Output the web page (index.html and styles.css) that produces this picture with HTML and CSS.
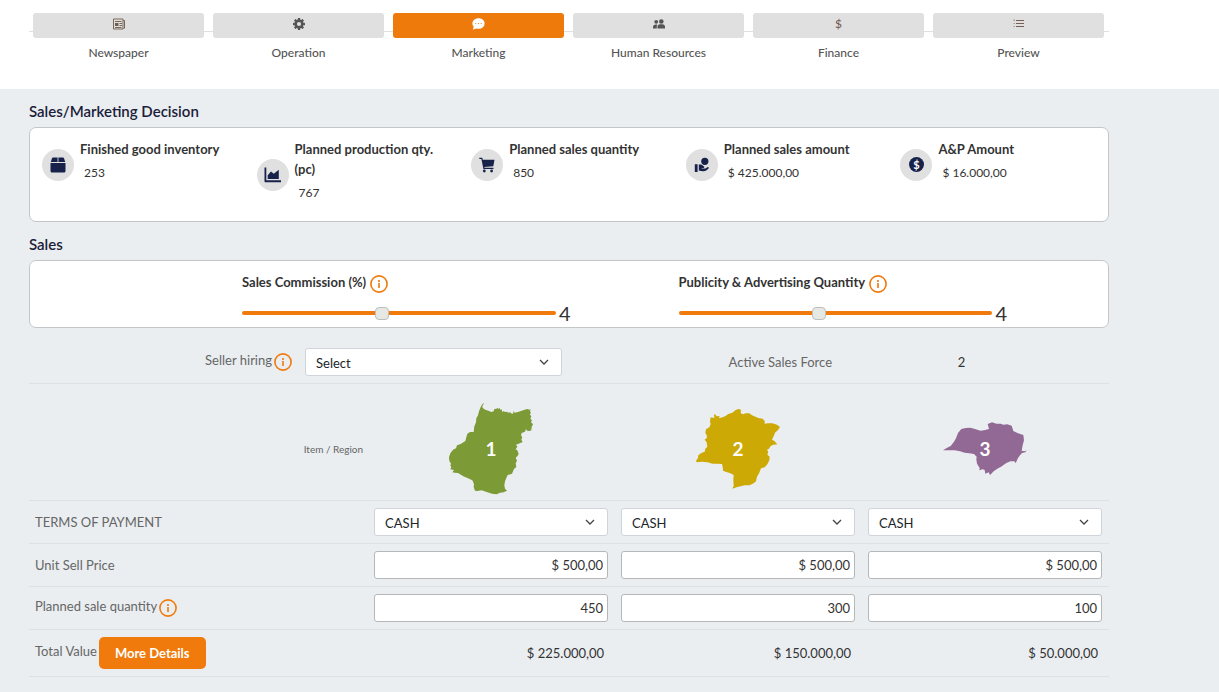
FILE: index.html
```html
<!DOCTYPE html>
<html lang="en">
<head>
  <meta charset="UTF-8" />
  <meta name="viewport" content="width=device-width, initial-scale=1.0"/>
  <title>Sales/Marketing Decision</title>
  <link rel="stylesheet" href="styles.css">
</head>
<body>
  <!-- shared icon -->
  <svg class="hidden">
    <symbol id="icon-info" viewBox="0 0 18 18">
      <circle cx="9" cy="9" r="8.1" fill="none" stroke="#f07a0c" stroke-width="1.6"/>
      <path d="M8 5h2v2H8zM8 8h2v5H8z" fill="#f0923c"/>
    </symbol>
  </svg>

  <header>
    <nav>
      <ul class="steps">
        <li>
          <a href="#">
            <span class="step-box">
              <svg width="12" height="12" viewBox="0 0 12 12" fill="none" stroke="#7a6657"><path d="M.5 1h9.500v10H.5zM10 2.500h1.500v7.500l-1 1"/><path d="M2 3.500h6.500M6.500 5.500H9M6.500 7.500H9M2 9.500h6.500"/><path d="M2 5h3.500v3H2z" fill="#6b6057" stroke="none"/></svg>
            </span>
            Newspaper
          </a>
        </li>
        <li>
          <a href="#">
            <span class="step-box">
              <svg width="12" height="12" viewBox="0 0 12 12"><g fill="#555"><rect x="4.800" width="2.400" height="12" rx=".5"/><rect x="4.800" width="2.400" height="12" rx=".5" transform="rotate(45 6 6)"/><rect x="4.800" width="2.400" height="12" rx=".5" transform="rotate(90 6 6)"/><rect x="4.800" width="2.400" height="12" rx=".5" transform="rotate(135 6 6)"/><circle cx="6" cy="6" r="4.500"/></g><circle cx="6" cy="6" r="2.100" fill="#e0e0e0"/></svg>
            </span>
            Operation
          </a>
        </li>
        <li class="active">
          <a href="#">
            <span class="step-box">
              <svg width="13" height="12" viewBox="0 0 13 12"><path d="M6.500.2C3 .2.400 2.500.400 5.400c0 1.300.500 2.400 1.300 3.300L.900 11.800l3.300-1.300c.7.200 1.500.300 2.300.300 3.500 0 6.100-2.400 6.100-5.400S10 .200 6.500.200z" fill="#fff"/><g fill="#ee7a0c"><circle cx="3.800" cy="5.500" r=".6"/><circle cx="6.500" cy="5.500" r=".6"/><circle cx="9.200" cy="5.500" r=".6"/></g></svg>
            </span>
            Marketing
          </a>
        </li>
        <li>
          <a href="#">
            <span class="step-box">
              <svg width="12" height="12" viewBox="0 0 12 12" fill="#555"><circle cx="3.200" cy="3.800" r="1.900"/><circle cx="8.300" cy="3.500" r="2.300"/><path d="M0 10.500V8.800C0 7.300 1.200 6.400 2.800 6.400h1.500C3.800 7.200 3.800 8.500 3.800 10.500zM4.500 10.500V8.800c0-1.500 1-2.500 2.500-2.500h2.500c1.500 0 2.500 1 2.500 2.500v1.700z"/></svg>
            </span>
            Human Resources
          </a>
        </li>
        <li>
          <a href="#">
            <span class="step-box dollar">$</span>
            Finance
          </a>
        </li>
        <li>
          <a href="#">
            <span class="step-box">
              <svg width="12" height="12" viewBox="0 0 12 12" fill="#765f58"><path d="M3 2h8v1H3zM3 5h8v1H3zM3 8h8v1H3z"/><path d="M.500 1.500H2v1.500H.500zM.500 5H2v1H.500zM.500 8H2v1H.500z" fill="#a39a96"/></svg>
            </span>
            Preview
          </a>
        </li>
      </ul>
    </nav>
  </header>

  <main>
    <h2>Sales/Marketing Decision</h2>
    <section class="card summary">
      <div class="stat">
        <span class="stat-icon">
          <svg width="16" height="16" viewBox="0 0 16 16" fill="#17224a"><path d="M3 .5h4.600V5H.8l1.100-3.600C2.100.800 2.400.500 3 .500zM8.400.500H13c.6 0 .9.300 1.100.900L15.200 5H8.400zM.500 6h15v8c0 .900-.600 1.500-1.500 1.500H2c-.900 0-1.500-.600-1.500-1.500z"/></svg>
        </span>
        <div>
          <h3>Finished good inventory</h3>
          <p>253</p>
        </div>
      </div>
      <div class="stat">
        <span class="stat-icon">
          <svg width="17" height="16" viewBox="0 0 17 16" fill="#17224a"><path d="M.500.500h1.800v12.800H17v1.900H1.500c-.600 0-1-.400-1-1z"/><path d="M3.700 12V8.200L7 4.400l2.800 2.300 5-3.900V12z"/></svg>
        </span>
        <div>
          <h3>Planned production qty. (pc)</h3>
          <p>767</p>
        </div>
      </div>
      <div class="stat">
        <span class="stat-icon">
          <svg width="16" height="16" viewBox="0 0 16 16" fill="#17224a"><path d="M.300.700h2.900l.6 2H15.500l-1.200 6.500L5.300 9.900l.2.900h9v1.200H4.400L2.400 2H.300z"/><circle cx="5.300" cy="14" r="1.400"/><circle cx="12.600" cy="14" r="1.400"/></svg>
        </span>
        <div>
          <h3>Planned sales quantity</h3>
          <p>850</p>
        </div>
      </div>
      <div class="stat">
        <span class="stat-icon">
          <svg width="16" height="16" viewBox="0 0 16 16" fill="#17224a"><circle cx="10.800" cy="4.300" r="3.600"/><path d="M.800 7.200h2.800v7.800H.800zM4.800 7.500h2.500l2.500 1.700c.9.600.5 1.700-.4 1.700H7.700v.7h3.700l2-1.400c.9-.600 1.900.400 1.100 1.300-1 1.200-2.200 2.200-3.800 2.500-2.100.500-3.900-.1-5.900-.6z"/></svg>
        </span>
        <div>
          <h3>Planned sales amount</h3>
          <p>$ 425.000,00</p>
        </div>
      </div>
      <div class="stat">
        <span class="stat-icon">
          <span class="coin">$</span>
        </span>
        <div>
          <h3>A&amp;P Amount</h3>
          <p>$ 16.000,00</p>
        </div>
      </div>
    </section>

    <h2>Sales</h2>
    <section class="card sliders">
      <div class="slider">
        <div class="slider-label">
          <label for="commission">Sales Commission (%)</label>
          <svg class="info"><use href="#icon-info"/></svg>
        </div>
        <div class="slider-row">
          <input type="range" id="commission" min="0" max="9" value="4">
          <output for="commission">4</output>
        </div>
      </div>
      <div class="slider">
        <div class="slider-label">
          <label for="publicity">Publicity &amp; Advertising Quantity</label>
          <svg class="info"><use href="#icon-info"/></svg>
        </div>
        <div class="slider-row">
          <input type="range" id="publicity" min="0" max="9" value="4">
          <output for="publicity">4</output>
        </div>
      </div>
    </section>

    <section class="hiring">
      <div class="right">
        <label for="seller">Seller hiring</label><svg class="info"><use href="#icon-info"/></svg>
      </div>
      <div>
        <select id="seller"><option>Select</option></select>
      </div>
      <div class="right">Active Sales Force</div>
      <div class="force">2</div>
    </section>

    <table class="regions">
      <thead>
        <tr>
          <th class="corner">Item / Region</th>
          <th>
            <div class="map">
              <svg width="84" height="92" viewBox="57 40 252 276"><polygon fill="#7c9a35" points="152,52 155,47 160,40 161,43 157,49 158,55 166,60 175,63 184,67 191,65 193,58 200,57 202,54 205,58 209,55 212,61 215,59 217,67 222,64 224,67 232,66 234,69 241,68 245,72 249,72 251,64 254,69 264,67 275,63 284,60 291,58 299,60 302,57 300,65 303,70 299,74 304,80 301,87 306,92 303,97 309,104 305,112 304,122 299,124 291,123 288,118 285,126 275,130 273,137 277,143 274,150 278,157 266,162 258,165 262,171 257,179 262,182 266,193 262,200 257,204 261,213 257,221 259,232 252,238 246,252 233,256 229,265 225,275 223,287 225,297 231,303 221,308 210,309 200,314 186,312 170,307 155,302 142,304 135,303 131,292 132,283 127,272 114,266 100,260 84,250 74,249 67,248 72,241 61,239 64,232 61,228 63,222 58,214 57,203 61,191 69,180 78,176 81,167 92,163 106,154 109,143 112,132 120,127 131,127 133,110 138,98 139,86 144,77 147,65"/></svg>
              <span>1</span>
            </div>
          </th>
          <th>
            <div class="map">
              <svg width="84" height="80" viewBox="48 57 252 240"><polygon fill="#cca904" points="92,82 103,84 102,73 107,74 110,79 119,78 117,85 128,82 137,78 145,72 157,68 167,60 175,57 183,59 182,70 190,73 197,70 208,70 215,75 226,80 235,84 248,86 254,93 254,101 264,100 277,100 291,104 300,111 294,120 285,128 281,139 276,149 283,153 292,163 280,164 272,168 267,176 261,179 265,186 262,194 269,200 268,211 262,223 254,232 243,235 238,248 231,260 228,274 222,279 209,286 194,286 182,289 172,291 157,296 161,287 160,268 161,255 151,250 139,246 129,242 128,230 126,222 112,221 98,221 82,217 66,215 50,217 48,212 54,204 55,196 64,189 74,185 76,176 82,170 80,157 74,149 81,143 80,135 76,129 78,118 88,112 92,103 90,94"/></svg>
              <span>2</span>
            </div>
          </th>
          <th>
            <div class="map">
              <svg width="84" height="54" viewBox="39 65 252 162"><polygon fill="#926995" points="39,150 50,143 62,137 72,124 78,114 84,98 94,86 107,83 121,82 135,86 151,91 162,90 177,86 173,71 186,66 199,70 212,70 220,73 232,72 245,76 250,92 264,99 280,104 282,120 278,135 275,151 284,153 290,150 286,156 276,158 270,165 264,173 260,182 257,188 253,183 241,183 228,189 213,199 202,205 191,213 184,220 180,224 176,216 166,220 164,209 158,207 148,210 149,203 141,190 139,177 140,169 132,161 118,159 104,157 90,153 74,150 56,150"/></svg>
              <span>3</span>
            </div>
          </th>
        </tr>
      </thead>
      <tbody>
        <tr>
          <td>TERMS OF PAYMENT</td>
          <td><select aria-label="Terms of payment, region 1"><option>CASH</option></select></td>
          <td><select aria-label="Terms of payment, region 2"><option>CASH</option></select></td>
          <td><select aria-label="Terms of payment, region 3"><option>CASH</option></select></td>
        </tr>
        <tr>
          <td>Unit Sell Price</td>
          <td><input type="text" aria-label="Unit sell price, region 1" value="$ 500,00"></td>
          <td><input type="text" aria-label="Unit sell price, region 2" value="$ 500,00"></td>
          <td><input type="text" aria-label="Unit sell price, region 3" value="$ 500,00"></td>
        </tr>
        <tr>
          <td>Planned sale quantity<svg class="info"><use href="#icon-info"/></svg></td>
          <td><input type="text" aria-label="Planned sale quantity, region 1" value="450"></td>
          <td><input type="text" aria-label="Planned sale quantity, region 2" value="300"></td>
          <td><input type="text" aria-label="Planned sale quantity, region 3" value="100"></td>
        </tr>
        <tr>
          <td>Total Value<button type="button" class="btn">More Details</button></td>
          <td class="total">$ 225.000,00</td>
          <td class="total">$ 150.000,00</td>
          <td class="total">$ 50.000,00</td>
        </tr>
      </tbody>
    </table>
  </main>
</body>
</html>
```
FILE: styles.css
```css
* {
  box-sizing: border-box;
}
body {
  margin: 0;
  background: #eaeef1;
  color: #333;
  font-family: Lato, "Liberation Sans", sans-serif;
  font-size: 13px;
  line-height: 20px;
}
h2, h3, p {
  margin: 0;
}
.hidden {
  display: none;
}

/* steps */
header {
  background: #fff;
  padding: 13px 110px 26px 29px;
}
.steps {
  list-style: none;
  display: grid;
  grid-template-columns: repeat(6, 1fr);
  margin: 0;
  padding: 0;
  background: linear-gradient(#e0e0e0, #e0e0e0) 0 18px / 100% 1px no-repeat;
}
.steps a {
  display: block;
  padding: 0 5px 0 4px;
  color: #555;
  font-size: 12px;
  font-weight: 500;
  text-align: center;
  text-decoration: none;
}
.step-box {
  display: flex;
  justify-content: center;
  height: 25px;
  margin-bottom: 5px;
  padding-top: 5px;
  border-radius: 3px;
  background: #e0e0e0;
}
.active .step-box {
  background: #ee7a0c;
}
.dollar {
  padding-top: 1px;
  color: #765f58;
}

/* content */
main {
  padding: 12px 110px 16px 29px;
}
h2 {
  color: #1a2038;
  font-size: 15px;
  font-weight: 600;
}
.card {
  margin: 6px 0 12px;
  background: #fff;
  border: 1px solid #c3c7ca;
  border-radius: 7px;
}
.summary {
  display: grid;
  grid-template-columns: repeat(5, 1fr);
  align-items: start;
  min-height: 95px;
  padding: 11px 0 11px 5px;
}
.stat {
  display: flex;
  align-items: center;
  padding: 0 20px 0 7px;
}
.stat-icon {
  flex: none;
  display: flex;
  align-items: center;
  justify-content: center;
  width: 32px;
  height: 32px;
  margin-right: 6px;
  border-radius: 50%;
  background: #e0e0e0;
}
.coin {
  width: 15px;
  height: 15px;
  border-radius: 50%;
  background: #17224a;
  color: #fff;
  font-size: 11px;
  font-weight: bold;
  line-height: 15px;
  text-align: center;
}
.stat h3 {
  font-size: 13px;
  font-weight: bold;
}
.stat p {
  margin: 4px 0 7px 4px;
  font-size: 12px;
}

/* sliders */
.sliders {
  display: grid;
  grid-template-columns: 1fr 1fr;
  gap: 108px;
  margin-bottom: 13px;
  padding: 11px 101px 4px 212px;
}
.slider-label {
  display: flex;
  gap: 4px;
  font-weight: bold;
}
.slider-label .info {
  margin: 3px 0 0;
}
.slider-row {
  display: flex;
  align-items: center;
  gap: 3px;
  height: 20px;
  margin-top: 10px;
}
.slider-row input {
  -webkit-appearance: none;
  appearance: none;
  flex: 1;
  min-width: 0;
  height: 4px;
  margin: 0;
  border-radius: 2px;
  background: #f07a0c;
}
.slider-row input::-webkit-slider-thumb {
  -webkit-appearance: none;
  width: 14px;
  height: 13px;
  border: 1px solid #bdbfbc;
  border-radius: 4px;
  background: #e6e8e4;
}
.slider-row output {
  font-size: 20px;
}
.info {
  display: inline-block;
  width: 18px;
  height: 18px;
  margin: 0 0 4px 2px;
  vertical-align: -10px;
}

/* form rows */
.hiring {
  display: grid;
  grid-template-columns: repeat(4, 1fr);
  align-items: center;
  border-bottom: 1px solid #dde1e4;
  color: #666;
}
.hiring > div {
  padding: 7px 7px 7px 6px;
}
.right {
  text-align: right;
}
.hiring .force {
  padding-right: 31px;
  color: #333;
  text-align: center;
}
select, td input {
  display: block;
  width: 100%;
  height: 28px;
  border-radius: 3px;
  background-color: #fff;
  color: #212529;
  font: inherit;
}
select {
  -webkit-appearance: none;
  appearance: none;
  padding: 1px 10px 0;
  border: 1px solid #ced4da;
  background-image: url("data:image/svg+xml,%3Csvg xmlns='http://www.w3.org/2000/svg' viewBox='0 0 10 6'%3E%3Cpath d='M1 1l4 4 4-4' fill='none' stroke='%23444' stroke-width='1.3'/%3E%3C/svg%3E");
  background-repeat: no-repeat;
  background-position: right 12px center;
  background-size: 10px 6px;
}
td input {
  padding: 0 4px 1px;
  border: 1px solid #b5b8ba;
  color: #333;
  text-align: right;
}
.regions {
  width: 100%;
  border-collapse: separate;
  border-spacing: 0;
  table-layout: fixed;
  color: #666;
}
.regions th, .regions td {
  padding: 7px 7px 7px 6px;
  border-bottom: 1px solid #dde1e4;
}
.regions th {
  padding: 19px 7px 5px 6px;
}
.regions .corner {
  width: 31.4%;
  padding-right: 5px;
  font-size: 10px;
  font-weight: normal;
  text-align: right;
}
.map {
  display: grid;
  place-items: center;
}
.map svg, .map span {
  grid-area: 1 / 1;
}
.map span {
  color: #fff;
  font-size: 19px;
  font-weight: bold;
}
.regions .total {
  padding-right: 11px;
  color: #333;
  text-align: right;
}
.btn {
  height: 32px;
  margin-left: 2px;
  padding: 0 16px;
  border: none;
  border-radius: 5px;
  background: #f07a0c;
  color: #fff;
  font: inherit;
  font-weight: bold;
  vertical-align: middle;
  cursor: pointer;
}
```
